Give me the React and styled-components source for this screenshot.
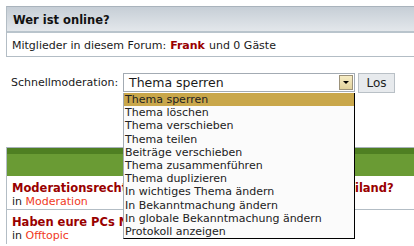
import styled, { createGlobalStyle } from "styled-components";

const Global = createGlobalStyle`
  html, body {
    margin: 0;
    padding: 0;
    background: #ffffff;
    font-family: "DejaVu Sans", Verdana, sans-serif;
    font-size: 11px;
    color: #1a1a1a;
    overflow: hidden;
  }
`;

const Page = styled.div`
  width: 414px;
  height: 246px;
  position: relative;
  overflow: hidden;
`;

const Box = styled.div`
  margin: ${(p) => p.top || 0}px 0 0 6px;
  border-top: 1px solid #a9b3bc;
  border-left: 1px solid #b3bdc5;
  border-bottom: 1px solid #b3bdc5;
`;

const Head = styled.div`
  display: flex;
  align-items: center;
  padding-left: 6px;
  padding-top: 1px;
  box-sizing: border-box;
  height: 26px;
  background: linear-gradient(#c6ced6, #e3e7eb);
  border-bottom: 2px solid #b9c4cc;
  font-weight: bold;
  font-size: 11.5px;
  color: #111;
`;

const Row = styled.div`
  height: 23px;
  display: flex;
  align-items: center;
  padding-left: 5px;
  padding-top: 2px;
  box-sizing: border-box;
  background: #fff;
`;

const Strong = styled.b`
  color: #990000;
  margin: 0 4px;
`;

const ModRow = styled.div`
  display: flex;
  align-items: center;
  height: 19px;
  margin-top: 16px;
  padding-left: 11px;
  position: relative;
`;

const Label = styled.span`
  width: 112px;
`;

const Select = styled.div`
  width: 225px;
  height: 17px;
  border: 1px solid #a3abb3;
  background: #fff;
  display: flex;
  align-items: center;
  padding-left: 5px;
  box-sizing: content-box;
  font-size: 12.5px;
  position: relative;
  justify-content: space-between;
`;

const Arrow = styled.span`
  width: 12px;
  height: 13px;
  margin-right: 1px;
  border: 1px solid #9c927a;
  background: linear-gradient(#f6ecc4, #e2d29c);
  display: flex;
  align-items: center;
  justify-content: center;
  &::after {
    content: "";
    border-left: 3px solid transparent;
    border-right: 3px solid transparent;
    border-top: 3px solid #000;
  }
`;

const Button = styled.div`
  margin-left: 3px;
  width: 35px;
  height: 18px;
  border: 1px solid #b9c0c6;
  background: #e7eaed;
  display: flex;
  align-items: center;
  justify-content: center;
  font-size: 12px;
  color: #222;
`;

const List = styled.div`
  position: absolute;
  left: 123px;
  top: 93px;
  width: 230px;
  background: #fbfbfb;
  border-left: 1px solid #a3abb3;
  border-right: 1px solid #000;
  border-bottom: 1px solid #000;
  z-index: 5;
`;

const Item = styled.div`
  height: 13.2px;
  line-height: 13px;
  padding-left: 1px;
  font-size: 11px;
  color: #222;
  background: ${(p) => (p.active ? "#c9a74b" : "transparent")};
  white-space: nowrap;
`;

const Bar = styled.div`
  height: 28px;
  background: linear-gradient(#4f7f22 0, #4f7f22 6px, #6a9b34 6px, #6a9b34 100%);
`;

const Topic = styled.div`
  height: 34px;
  padding: 5px 0 0 5px;
  box-sizing: border-box;
  border-bottom: ${(p) => (p.last ? "none" : "1px solid #b3bdc5")};
  white-space: nowrap;
`;

const Title = styled.div`
  font-weight: bold;
  font-size: 11.5px;
  color: #990000;
  line-height: 14px;
`;

const Sub = styled.div`
  line-height: 14px;
  a {
    color: #f0391c;
    text-decoration: none;
  }
`;

const Lower = styled.div`
  margin: 55px 0 0 6px;
  border-top: 1px solid #a9b3bc;
  border-left: 1px solid #b3bdc5;
`;

const options = [
  "Thema sperren",
  "Thema löschen",
  "Thema verschieben",
  "Thema teilen",
  "Beiträge verschieben",
  "Thema zusammenführen",
  "Thema duplizieren",
  "In wichtiges Thema ändern",
  "In Bekanntmachung ändern",
  "In globale Bekanntmachung ändern",
  "Protokoll anzeigen",
];

export default function App() {
  return (
    <Page>
      <Global />
      <Box top={6}>
        <Head>Wer ist online?</Head>
        <Row>
          Mitglieder in diesem Forum:<Strong>Frank</Strong>und 0 Gäste
        </Row>
      </Box>
      <ModRow>
        <Label>Schnellmoderation:</Label>
        <Select>
          Thema sperren
          <Arrow />
        </Select>
        <Button>Los</Button>
      </ModRow>
      <List>
        {options.map((o, i) => (
          <Item key={o} active={i === 0}>
            {o}
          </Item>
        ))}
      </List>
      <Lower>
        <Bar />
        <Topic>
          <Title>Moderationsrechte für das Unterforum Urlaub in Thailand?</Title>
          <Sub>
            in <a href="#">Moderation</a>
          </Sub>
        </Topic>
        <Topic last>
          <Title>Haben eure PCs Namen?</Title>
          <Sub>
            in <a href="#">Offtopic</a>
          </Sub>
        </Topic>
      </Lower>
    </Page>
  );
}
